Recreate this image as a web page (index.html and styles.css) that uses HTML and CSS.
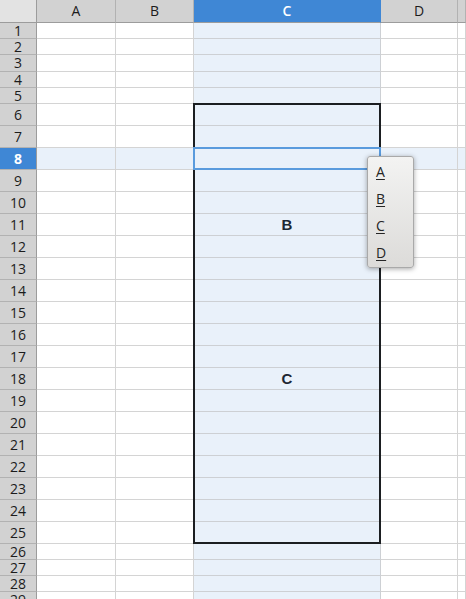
FILE: index.html
```html
<!DOCTYPE html>
<html>
<head>
<meta charset="utf-8">
<link rel="stylesheet" href="styles.css">
</head>
<body>
<div class="sheet">
  <div class="corner"></div><div class="ch">A</div><div class="ch">B</div><div class="ch ch-sel">C</div><div class="ch">D</div><div class="ch"></div>
  <div class="rh">1</div><div class="c"></div><div class="c"></div><div class="c cc"></div><div class="c"></div><div class="c"></div>
  <div class="rh">2</div><div class="c"></div><div class="c"></div><div class="c cc"></div><div class="c"></div><div class="c"></div>
  <div class="rh">3</div><div class="c"></div><div class="c"></div><div class="c cc"></div><div class="c"></div><div class="c"></div>
  <div class="rh">4</div><div class="c"></div><div class="c"></div><div class="c cc"></div><div class="c"></div><div class="c"></div>
  <div class="rh">5</div><div class="c"></div><div class="c"></div><div class="c cc"></div><div class="c"></div><div class="c"></div>
  <div class="rh">6</div><div class="c"></div><div class="c"></div><div class="c cc"></div><div class="c"></div><div class="c"></div>
  <div class="rh">7</div><div class="c"></div><div class="c"></div><div class="c cc"></div><div class="c"></div><div class="c"></div>
  <div class="rh rh-sel">8</div><div class="c hl"></div><div class="c hl"></div><div class="c cc"></div><div class="c hl"></div><div class="c hl"></div>
  <div class="rh">9</div><div class="c"></div><div class="c"></div><div class="c cc"></div><div class="c"></div><div class="c"></div>
  <div class="rh">10</div><div class="c"></div><div class="c"></div><div class="c cc"></div><div class="c"></div><div class="c"></div>
  <div class="rh">11</div><div class="c"></div><div class="c"></div><div class="c cc val">B</div><div class="c"></div><div class="c"></div>
  <div class="rh">12</div><div class="c"></div><div class="c"></div><div class="c cc"></div><div class="c"></div><div class="c"></div>
  <div class="rh">13</div><div class="c"></div><div class="c"></div><div class="c cc"></div><div class="c"></div><div class="c"></div>
  <div class="rh">14</div><div class="c"></div><div class="c"></div><div class="c cc"></div><div class="c"></div><div class="c"></div>
  <div class="rh">15</div><div class="c"></div><div class="c"></div><div class="c cc"></div><div class="c"></div><div class="c"></div>
  <div class="rh">16</div><div class="c"></div><div class="c"></div><div class="c cc"></div><div class="c"></div><div class="c"></div>
  <div class="rh">17</div><div class="c"></div><div class="c"></div><div class="c cc"></div><div class="c"></div><div class="c"></div>
  <div class="rh">18</div><div class="c"></div><div class="c"></div><div class="c cc val">C</div><div class="c"></div><div class="c"></div>
  <div class="rh">19</div><div class="c"></div><div class="c"></div><div class="c cc"></div><div class="c"></div><div class="c"></div>
  <div class="rh">20</div><div class="c"></div><div class="c"></div><div class="c cc"></div><div class="c"></div><div class="c"></div>
  <div class="rh">21</div><div class="c"></div><div class="c"></div><div class="c cc"></div><div class="c"></div><div class="c"></div>
  <div class="rh">22</div><div class="c"></div><div class="c"></div><div class="c cc"></div><div class="c"></div><div class="c"></div>
  <div class="rh">23</div><div class="c"></div><div class="c"></div><div class="c cc"></div><div class="c"></div><div class="c"></div>
  <div class="rh">24</div><div class="c"></div><div class="c"></div><div class="c cc"></div><div class="c"></div><div class="c"></div>
  <div class="rh">25</div><div class="c"></div><div class="c"></div><div class="c cc"></div><div class="c"></div><div class="c"></div>
  <div class="rh">26</div><div class="c"></div><div class="c"></div><div class="c cc"></div><div class="c"></div><div class="c"></div>
  <div class="rh">27</div><div class="c"></div><div class="c"></div><div class="c cc"></div><div class="c"></div><div class="c"></div>
  <div class="rh">28</div><div class="c"></div><div class="c"></div><div class="c cc"></div><div class="c"></div><div class="c"></div>
  <div class="rh rh-last">29</div><div class="c"></div><div class="c"></div><div class="c cc"></div><div class="c"></div><div class="c"></div>
  <div class="range"></div>
  <div class="cursor"></div>
</div>
<ul class="menu">
  <li class="item">A</li>
  <li class="item">B</li>
  <li class="item">C</li>
  <li class="item">D</li>
</ul>
</body>
</html>
```
FILE: styles.css
```css
html, body {
  margin: 0;
  padding: 0;
  width: 466px;
  height: 599px;
  overflow: hidden;
  background: #ffffff;
}

body {
  position: relative;
  font-family: "Open Sans", "Noto Sans", sans-serif;
}

.sheet {
  position: relative;
  display: grid;
  grid-template-columns: 37px 79px 78px 187px 77px 1fr;
  grid-template-rows: 23px 16px 16px 17px 16px 16px repeat(20, 22px) repeat(3, 16px) 8px;
  height: 599px;
  overflow: hidden;
}

.sheet > div {
  box-sizing: border-box;
}

.corner {
  background: #e3e3e3;
  border-right: 1px solid #9c9c9c;
  border-bottom: 1px solid #9c9c9c;
}

.ch {
  background: #d2d2d2;
  border-right: 1px solid #b2b2b2;
  border-bottom: 1px solid #9c9c9c;
  color: #1c1c1c;
  font-size: 14px;
  line-height: 22px;
  text-align: center;
}

.ch-sel {
  background: #3f87d5;
  color: #ffffff;
  font-weight: 600;
  border-right-color: #3f87d5;
}

.rh {
  background: #d2d2d2;
  border-right: 1px solid #9c9c9c;
  border-bottom: 1px solid #b2b2b2;
  color: #1c1c1c;
  font-size: 14px;
  text-align: center;
  display: flex;
  align-items: center;
  justify-content: center;
  line-height: 14px;
}

.rh-last {
  align-items: flex-start;
  line-height: 16px;
}

.rh-sel {
  background: #3f87d5;
  color: #ffffff;
  font-weight: 700;
}

.c {
  border-right: 1px solid #d4d4d4;
  border-bottom: 1px solid #d4d4d4;
}

.cc {
  background: #e9f1fa;
  border-right-color: #cdd0d4;
  border-bottom-color: #cdd0d4;
}

.hl {
  background: #e9f1fa;
}

.val {
  display: flex;
  align-items: center;
  justify-content: center;
  font-family: "Liberation Sans", Arial, sans-serif;
  font-weight: 700;
  font-size: 15px;
  color: #1d2733;
}

.range {
  position: absolute;
  grid-column: 4 / 5;
  grid-row: 7 / 27;
  top: -1px;
  left: -1px;
  right: 0;
  bottom: 0;
  border: 2px solid #1b1e21;
}

.cursor {
  position: absolute;
  grid-column: 4 / 5;
  grid-row: 9 / 10;
  top: -1px;
  left: -1px;
  right: 0;
  bottom: 0;
  border: 2px solid #5a9bdd;
}

.menu {
  position: absolute;
  left: 367px;
  top: 156px;
  width: 47px;
  height: 112px;
  box-sizing: border-box;
  margin: 0;
  padding: 1px 0 0 0;
  list-style: none;
  border: 1px solid #a9a9a9;
  border-radius: 3px;
  background: linear-gradient(#f3f3f2, #dcdbd9);
  box-shadow: 0 1px 5px rgba(0, 0, 0, 0.35);
}

.item {
  height: 27px;
  line-height: 27px;
  padding-left: 8px;
  font-size: 14px;
  color: #262626;
  text-decoration: underline;
  text-underline-offset: 2px;
}
```
